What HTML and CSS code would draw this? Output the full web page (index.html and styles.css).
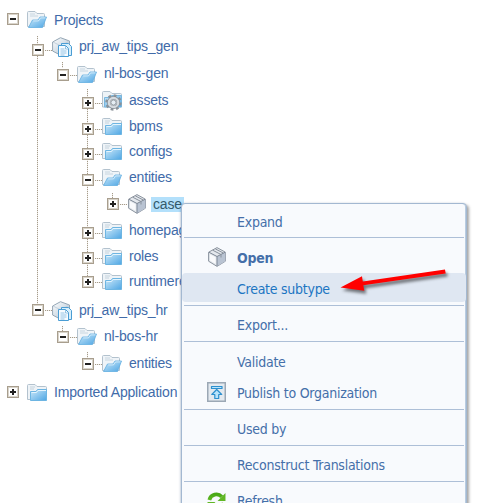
FILE: index.html
```html
<!DOCTYPE html>
<html lang="en">
<head>
<meta charset="utf-8">
<title>Projects</title>
<link rel="stylesheet" href="styles.css">
</head>
<body>
<svg class="defs" width="0" height="0" aria-hidden="true">
  <defs>
    <linearGradient id="blue" x1="0" y1="0" x2="1" y2="1"><stop offset="0" stop-color="#cde9f9"/><stop offset="1" stop-color="#4ea6e4"/></linearGradient>
    <linearGradient id="pale" x1="0" y1="0" x2="1" y2="1"><stop offset="0" stop-color="#ffffff"/><stop offset="1" stop-color="#a9bed0"/></linearGradient>
    <linearGradient id="green" x1="0" y1="0" x2="0" y2="1"><stop offset="0" stop-color="#4aa916"/><stop offset="1" stop-color="#82cf38"/></linearGradient>
    <symbol id="folder" viewBox="0 0 20 17">
      <path d="M.5 15.5V1.5q0-1 1-1H8l2 2h8.5q1 0 1 1v12z" fill="#eef3f7" stroke="#b3c2ce"/>
      <path d="M3 3h5M3 5h4" stroke="#c5d3dd"/>
      <path d="M3.5 16.5v-9H9l1.5-2h9v11z" fill="url(#blue)" stroke="#6db5e2"/>
      <path d="M4.500 8.500h5l1.500-2h8" fill="none" stroke="#e4f4fd"/>
    </symbol>
    <symbol id="open" viewBox="0 0 20 17">
      <path d="M.5 15.500V1.500q0-1 1-1H8l2 2h6.500q1 0 1 1v12z" fill="#eff4f8" stroke="#b3c2ce"/>
      <path d="M3 3h5M3 5h8" stroke="#c8d6e0"/>
      <path d="M1.500 16.500 5.500 9H11l2-3h6.500l-4 10.500z" fill="url(#blue)" stroke="#62afe1" stroke-width=".8"/>
      <path d="M6.200 9.900h5.300l2-3h5" fill="none" stroke="#e1f3fd" stroke-width=".8"/>
    </symbol>
    <symbol id="project" viewBox="0 0 20 20">
      <path d="M.6 5 8.500.7 17.500 4v11L9 18.500.6 14z" fill="url(#pale)" stroke="#94a5b4"/>
      <path d="M1 5l8 4 8-5M9 9v9" fill="none" stroke="#c3d0dc"/>
      <path d="M9.500 6.500h7l3 3v9h-10z" fill="#d7effc" stroke="#4a9dd4"/>
      <path d="M6.500 8.500h7l3 3v8h-10z" fill="#f5fbff" stroke="#4a9dd4"/>
      <path d="M8.500 12h4M8.500 14h6M8.500 16h6M8.500 18h4M13.500 9v3h3" fill="none" stroke="#7db8de" stroke-width=".8"/>
    </symbol>
    <symbol id="assets" viewBox="0 0 20 20">
      <path d="M.5 16V1.500q0-1 1-1H8l2 2h8.500q1 0 1 1V16z" fill="#edf3f7" stroke="#b3c2ce"/>
      <path d="M2.500 16V6.500H8l1.500-2h10V16z" fill="url(#blue)" stroke="#7ab7de"/>
      <circle cx="11.500" cy="11.500" r="7" fill="none" stroke="#8b9299" stroke-width="2.500" stroke-dasharray="2.750 2.750"/>
      <circle cx="11.500" cy="11.500" r="4.800" fill="#fff" stroke="#858d95" stroke-width="3.400"/>
      <circle cx="11.500" cy="11.500" r="4.700" fill="none" stroke="#d5dadf" stroke-width="2.200"/>
      <circle cx="11.500" cy="11.500" r="2.600" fill="#e6eef4" stroke="#848c94" stroke-width=".9"/>
    </symbol>
    <symbol id="cube" viewBox="0 0 18 20">
      <path d="M.6 5.200 9 .6l8.400 4.600v9L9 19.400.6 14.200z" fill="#e4e8ed" stroke="#8b939e"/>
      <path d="M9 9.500l8.300-4.200v9L9 19.200z" fill="#b9c3d2"/>
      <path d="M1 5.300 9 9.500l8-4.200M9 9.500v9.500" fill="none" stroke="#7d8795"/>
      <path d="M4.700 3.200 13 7.500v3M7.300 1.900l8 4.100" fill="none" stroke="#8a929d"/>
      <path d="M2 7.500v6l5.500 3.300v-6.500z" fill="#f9fafc"/>
    </symbol>
    <symbol id="publish" viewBox="0 0 19 20">
      <rect x=".75" y=".75" width="17.500" height="18.500" fill="#e3e9ef" stroke="#9ca8b5" stroke-width="1.500"/>
      <path d="M4.500 4.500h10.500v2H4.500zM9.700 7.500l5 5h-3v4H7.800v-4h-3z" fill="#b9e4fb" stroke="#2d8fce" stroke-width="1.200" stroke-linejoin="round"/>
    </symbol>
    <symbol id="refresh" viewBox="0 0 18 18">
      <path d="M2.200 7.500A7 7 0 0 1 14 4.500M15.800 10.500A7 7 0 0 1 4 13.500" fill="none" stroke="url(#green)" stroke-width="3.600"/>
      <path d="M17.500 1v7.500H10zM.5 17V9.500H8z" fill="#61b725"/>
    </symbol>
  </defs>
</svg>
<ul class="tree">
  <li>
    <div class="row h33"><i class="tog up2"></i><svg class="ic f up1"><use href="#open"/></svg><span>Projects</span></div>
    <ul class="lines-projects">
      <li>
        <div class="row h26"><i class="tog link down3"></i><svg class="ic big"><use href="#project"/></svg><span>prj_aw_tips_gen</span></div>
        <ul class="lines-short">
          <li>
            <div class="row h27"><i class="tog link down1"></i><svg class="ic f down1"><use href="#open"/></svg><span>nl-bos-gen</span></div>
            <ul class="lines-folders">
              <li><div class="row h27"><i class="tog plus link down2"></i><svg class="ic big"><use href="#assets"/></svg><span>assets</span></div></li>
              <li><div class="row h26"><i class="tog plus link down2"></i><svg class="ic f"><use href="#folder"/></svg><span>bpms</span></div></li>
              <li><div class="row h25"><i class="tog plus link down2"></i><svg class="ic f"><use href="#folder"/></svg><span>configs</span></div></li>
              <li>
                <div class="row h26"><i class="tog link down2"></i><svg class="ic f"><use href="#open"/></svg><span>entities</span></div>
                <ul class="lines-short">
                  <li><div class="row h26"><i class="tog plus link"></i><svg class="ic cube"><use href="#cube"/></svg><span class="sel">case</span></div></li>
                </ul>
              </li>
              <li><div class="row h27"><i class="tog plus link down2"></i><svg class="ic f"><use href="#folder"/></svg><span>homepages</span></div></li>
              <li><div class="row h26"><i class="tog plus link down1"></i><svg class="ic f"><use href="#folder"/></svg><span>roles</span></div></li>
              <li><div class="row h25"><i class="tog plus link"></i><svg class="ic f"><use href="#folder"/></svg><span>runtimereferences</span></div></li>
            </ul>
          </li>
        </ul>
      </li>
      <li>
        <div class="row h29"><i class="tog link up1"></i><svg class="ic big"><use href="#project"/></svg><span>prj_aw_tips_hr</span></div>
        <ul class="lines-short">
          <li>
            <div class="row h26"><i class="tog link"></i><svg class="ic f"><use href="#open"/></svg><span>nl-bos-hr</span></div>
            <ul class="lines-short">
              <li><div class="row h27"><i class="tog link"></i><svg class="ic f"><use href="#open"/></svg><span>entities</span></div></li>
            </ul>
          </li>
        </ul>
      </li>
    </ul>
  </li>
  <li><div class="row h29"><i class="tog plus up1"></i><svg class="ic f"><use href="#folder"/></svg><span>Imported Application</span></div></li>
</ul>

<div class="menu">
  <div class="group first"><div class="item">Expand</div></div>
  <div class="group double">
    <div class="item bold"><svg class="mi cube"><use href="#cube"/></svg>Open</div>
    <div class="item active">Create subtype</div>
  </div>
  <div class="group"><div class="item">Export...</div></div>
  <div class="group double">
    <div class="item">Validate</div>
    <div class="item"><svg class="mi"><use href="#publish"/></svg>Publish to Organization</div>
  </div>
  <div class="group"><div class="item">Used by</div></div>
  <div class="group"><div class="item">Reconstruct Translations</div></div>
  <div class="group"><div class="item"><svg class="mi refresh"><use href="#refresh"/></svg>Refresh</div></div>
</div>
<svg class="arrow" viewBox="0 0 120 40"><path d="M5.500 23.500 27 12.300l.8 5.200L110 5.500l.7 4L28.300 21.200l1 5.600z" fill="#f00"/></svg>
</body>
</html>
```

FILE: styles.css
```css
html, body { height: 100%; }
body {
  margin: 0;
  position: relative;
  overflow: hidden;
  background: #fff;
  color: #416ba9;
  font: 14px/18px "Liberation Sans", Arial, sans-serif;
}
.defs { position: absolute; }

/* Tree */
.tree, .tree ul { margin: 0; padding: 0; list-style: none; }
.tree { padding-left: 7px; }
.tree ul { position: relative; padding-left: 25px; }
.tree ul::before {
  content: "";
  position: absolute;
  left: 30px;
  top: 3px;
  width: 1px;
  background: repeating-linear-gradient(#a59b8a 0 1px, #eeebe6 1px 2px);
}
.lines-short::before { height: 6px; }
.lines-projects::before { bottom: 71px; }
.lines-folders::before { bottom: 16px; }

.row {
  box-sizing: border-box;
  display: flex;
  align-items: flex-end;
  padding-bottom: 4px;
  white-space: nowrap;
  letter-spacing: -0.18px;
}
.h25 { height: 25px; }
.h26 { height: 26px; }
.h27 { height: 27px; }
.h29 { height: 29px; }
.h33 { height: 33px; }

.tog {
  position: relative;
  box-sizing: border-box;
  width: 12px;
  height: 12px;
  margin: 0 8px 2px 0;
  border: 1px solid #a89e8e;
  box-shadow: inset 0 0 0 1px #d9d4ca;
  background:
    linear-gradient(#222, #222) center / 6px 2px no-repeat,
    #fff;
}
.plus {
  background:
    linear-gradient(#222, #222) center / 6px 2px no-repeat,
    linear-gradient(#222, #222) center / 2px 6px no-repeat,
    #fff;
}
.link::after {
  content: "";
  position: absolute;
  left: 12px;
  top: 5px;
  width: 7px;
  height: 1px;
  background: repeating-linear-gradient(90deg, #a59b8a 0 1px, #eeebe6 1px 2px);
}
.ic { flex: none; width: 20px; margin-right: 7px; }
.f { height: 17px; margin-bottom: 0; }
.big { height: 20px; margin-bottom: -2px; }
.ic.cube { width: 18px; height: 20px; margin: 0 6px -2px 1px; }
.up2 { transform: translateY(-2px); }
.up1 { transform: translateY(-1px); }
.down1 { transform: translateY(1px); }
.down2 { transform: translateY(2px); }
.down3 { transform: translateY(3px); }
.sel {
  margin-left: -1px;
  padding: 0 2px;
  line-height: 15px;
  color: #345a6c;
  background: #b3e0fb;
}

/* Context menu */
.menu {
  position: absolute;
  left: 181px;
  top: 203px;
  box-sizing: border-box;
  width: 286px;
  height: 320px;
  border: 1px solid #a3b8d1;
  border-radius: 4px;
  background: #f8fafd;
  box-shadow: inset -1px 0 #b9cce0, 2px 2px 3px rgba(0, 0, 0, .35), -1px 0 2px rgba(90, 120, 160, .3);
  color: #456fa9;
  font: 14px/33px "DejaVu Sans Condensed", "DejaVu Sans", Tahoma, sans-serif;
  font-stretch: condensed;
  letter-spacing: -0.26px;
}
.group {
  position: relative;
  padding: 3px 0 1px;
  border-bottom: 1px solid #adbfd7;
  border-image: linear-gradient(90deg, transparent 3px, #adbfd7 3px 281px, transparent 281px) 1;
  border-width: 0 0 1px;
}
.first { padding: 2px 0 0; }
.double { padding-top: 4px; }
.item { position: relative; height: 31px; padding-left: 55px; white-space: nowrap; }
.active {
  height: 29px;
  margin-bottom: 2px;
  border-radius: 4px;
  background: #dfe7f2;
  color: #1c75c2;
}
.bold { font-weight: bold; }
.mi { position: absolute; left: 25px; top: 5px; width: 19px; height: 20px; }
.mi.cube { width: 20px; }
.mi.refresh { top: 7px; height: 19px; }

.arrow {
  position: absolute;
  left: 335px;
  top: 264px;
  width: 120px;
  height: 40px;
  filter: drop-shadow(2px 3px 1.5px rgba(0, 0, 0, .5));
}
```
